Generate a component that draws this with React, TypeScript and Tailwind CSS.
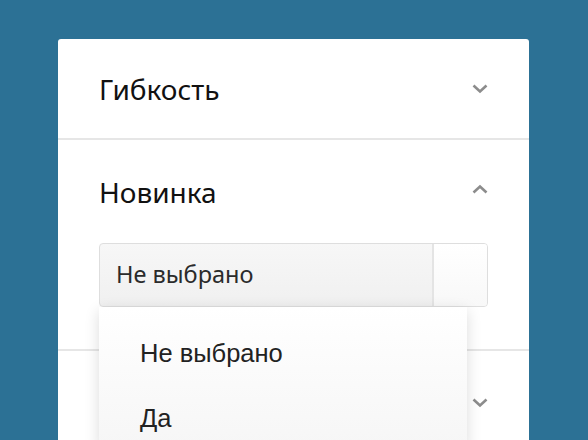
import React from "react";

const Chevron = ({ up = false }: { up?: boolean }) => (
  <svg width="16" height="10" viewBox="0 0 16 10" className="shrink-0">
    <path
      d={up ? "M1.5 8.5 L8 2.5 L14.5 8.5" : "M1.5 1.5 L8 7.5 L14.5 1.5"}
      fill="none"
      stroke="#8c8c8c"
      strokeWidth="2.6"
      strokeLinecap="butt"
      strokeLinejoin="miter"
    />
  </svg>
);

export default function App() {
  const noto = { fontFamily: '"Noto Sans", "Open Sans", sans-serif' };
  const arial = { fontFamily: '"Liberation Sans", Arial, sans-serif' };
  return (
    <div className="h-[440px] w-full overflow-hidden bg-[#2c7195] pl-[58px] pt-[39px]">
      <div className="w-[471px] rounded-t-[3px] bg-white">
        {/* Section 1 */}
        <div className="flex h-[101px] items-center justify-between border-b-2 border-[#e6e6e6] px-[41px]">
          <span className="text-[28px] leading-[28px] text-[#111]" style={noto}>
            Гибкость
          </span>
          <Chevron />
        </div>

        {/* Section 2 */}
        <div className="border-b-2 border-[#e6e6e6] px-[41px] pb-[42px] pt-[38px]">
          <div className="flex items-start justify-between">
            <span className="text-[28px] leading-[28px] text-[#111]" style={noto}>
              Новинка
            </span>
            <div className="mt-[6px]">
              <Chevron up />
            </div>
          </div>
          <div className="relative mt-[37px]">
            <div className="flex h-[64px] overflow-hidden rounded-[4px] border border-[#dedede] bg-gradient-to-b from-[#f7f7f7] to-[#f0f0f0]">
              <div className="flex flex-1 items-center pl-[16px]">
                <span className="text-[23.5px] text-[#2b2b2b]" style={noto}>
                  Не выбрано
                </span>
              </div>
              <div className="w-[55px] border-l-2 border-[#e4e4e4] bg-gradient-to-b from-[#ffffff] to-[#f8f8f8]" />
            </div>
            <div className="absolute left-0 top-full z-10 h-[140px] w-[368px] bg-gradient-to-b from-[#ffffff] to-[#f6f6f6] pl-[41px] pt-[14px] shadow-[0_4px_14px_rgba(0,0,0,0.14)]">
              <div className="h-[65px] text-[25.5px] leading-[65px] text-[#222]" style={arial}>
                Не выбрано
              </div>
              <div className="h-[65px] text-[25.5px] leading-[65px] text-[#222]" style={arial}>
                Да
              </div>
            </div>
          </div>
        </div>

        {/* Section 3 */}
        <div className="flex h-[101px] items-center justify-end px-[41px]">
          <div className="mt-[2px]">
            <Chevron />
          </div>
        </div>
      </div>
    </div>
  );
}
